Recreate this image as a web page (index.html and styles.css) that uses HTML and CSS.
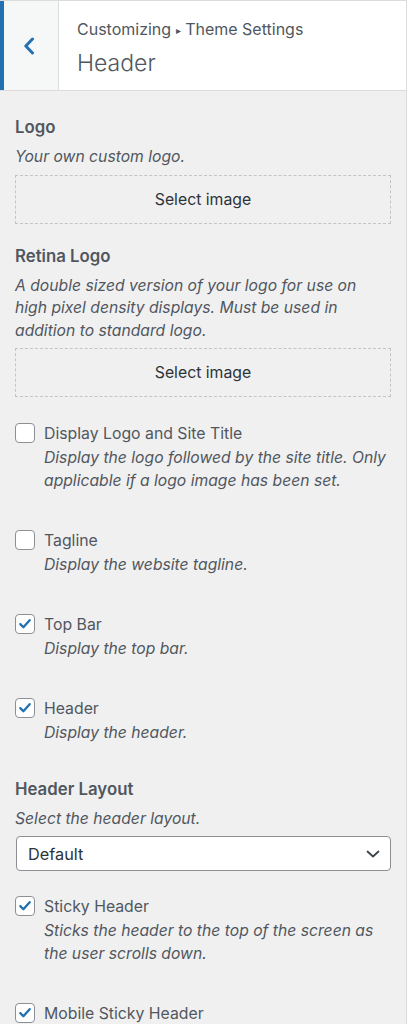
FILE: index.html
```html
<!DOCTYPE html>
<html lang="en">
<head>
<meta charset="utf-8">
<title>Customizing Header</title>
<link rel="stylesheet" href="styles.css">
</head>
<body>
<div class="panel">
  <header class="sec-head">
    <button class="back" aria-label="Back">
      <svg width="12" height="18" viewBox="0 0 12 18"><path d="M9.5 2 L2.8 9 L9.5 16" fill="none" stroke="#2271b1" stroke-width="3" stroke-linecap="round" stroke-linejoin="round"/></svg>
    </button>
    <div class="titles">
      <span class="crumb">Customizing <span class="tri">▸</span> Theme Settings</span>
      <h1 class="title">Header</h1>
    </div>
  </header>
  <ul class="controls">
    <li class="control media first">
      <span class="ctl-title">Logo</span>
      <span class="desc">Your own custom logo.</span>
      <button class="upload">Select image</button>
    </li>
    <li class="control media">
      <span class="ctl-title">Retina Logo</span>
      <span class="desc">A double sized version of your logo for use on high pixel density displays. Must be used in addition to standard logo.</span>
      <button class="upload">Select image</button>
    </li>
    <li class="control check after-media">
      <span class="box"></span>
      <div class="check-text">
        <span class="label">Display Logo and Site Title</span>
        <span class="desc">Display the logo followed by the site title. Only applicable if a logo image has been set.</span>
      </div>
    </li>
    <li class="control check">
      <span class="box"></span>
      <div class="check-text">
        <span class="label">Tagline</span>
        <span class="desc">Display the website tagline.</span>
      </div>
    </li>
    <li class="control check">
      <span class="box checked"><svg width="20" height="20" viewBox="0 0 20 20"><path d="M4.8 10.2 L8.2 13.6 L15.2 5.8" fill="none" stroke="#2271b1" stroke-width="2.6" stroke-linecap="round" stroke-linejoin="round"/></svg></span>
      <div class="check-text">
        <span class="label">Top Bar</span>
        <span class="desc">Display the top bar.</span>
      </div>
    </li>
    <li class="control check">
      <span class="box checked"><svg width="20" height="20" viewBox="0 0 20 20"><path d="M4.8 10.2 L8.2 13.6 L15.2 5.8" fill="none" stroke="#2271b1" stroke-width="2.6" stroke-linecap="round" stroke-linejoin="round"/></svg></span>
      <div class="check-text">
        <span class="label">Header</span>
        <span class="desc">Display the header.</span>
      </div>
    </li>
    <li class="control select-ctl">
      <span class="ctl-title">Header Layout</span>
      <span class="desc">Select the header layout.</span>
      <div class="select">
        <span>Default</span>
        <svg width="14" height="8" viewBox="0 0 14 8"><path d="M1.5 1.5 L7 6.5 L12.5 1.5" fill="none" stroke="#3c434a" stroke-width="1.8" stroke-linecap="round" stroke-linejoin="round"/></svg>
      </div>
    </li>
    <li class="control check after-select">
      <span class="box checked"><svg width="20" height="20" viewBox="0 0 20 20"><path d="M4.8 10.2 L8.2 13.6 L15.2 5.8" fill="none" stroke="#2271b1" stroke-width="2.6" stroke-linecap="round" stroke-linejoin="round"/></svg></span>
      <div class="check-text">
        <span class="label">Sticky Header</span>
        <span class="desc">Sticks the header to the top of the screen as the user scrolls down.</span>
      </div>
    </li>
    <li class="control check">
      <span class="box checked"><svg width="20" height="20" viewBox="0 0 20 20"><path d="M4.8 10.2 L8.2 13.6 L15.2 5.8" fill="none" stroke="#2271b1" stroke-width="2.6" stroke-linecap="round" stroke-linejoin="round"/></svg></span>
      <div class="check-text">
        <span class="label">Mobile Sticky Header</span>
        <span class="desc">Sticks the header on mobile devices.</span>
      </div>
    </li>
  </ul>
</div>
</body>
</html>
```

FILE: styles.css
```css
html, body {
  margin: 0;
  padding: 0;
  background: #ffffff;
}
body {
  font-family: Inter, "Noto Sans", "Liberation Sans", sans-serif;
  color: #50575e;
  height: 1024px;
  overflow: hidden;
}
.panel {
  width: 406px;
  min-height: 1024px;
  background: #f0f0f1;
  border-right: 1px solid #dcdcde;
}
.sec-head {
  display: flex;
  background: #ffffff;
  border-top: 1px solid #dcdcde;
  border-bottom: 1px solid #dcdcde;
  height: 89px;
}
.back {
  box-sizing: border-box;
  width: 59px;
  border: 0;
  border-left: 4px solid #2271b1;
  border-right: 1px solid #dcdcde;
  background: #f6f7f7;
  padding: 0 5px 0 0;
  margin: 0;
  display: flex;
  align-items: center;
  justify-content: center;
}
.titles {
  display: flex;
  flex-direction: column;
  padding: 18px 0 0 18px;
}
.crumb {
  font-size: 16px;
  line-height: 20px;
  color: #50575e;
  font-weight: 400;
}
.tri {
  font-size: 10px;
  vertical-align: 1px;
}
.title {
  margin: 8px 0 0;
  font-size: 23px;
  line-height: 30px;
  font-weight: 300;
  color: #50575e;
}
.controls {
  list-style: none;
  margin: 0;
  padding: 25px 15px 0 15px;
}
.control {
  margin: 0;
}
.ctl-title {
  display: block;
  font-size: 16.8px;
  font-weight: 600;
  line-height: 22px;
  margin-bottom: 8px;
  color: #50575e;
}
.desc {
  display: block;
  font-size: 15.7px;
  font-style: italic;
  line-height: 22.5px;
  color: #50575e;
}
.media {
  margin-top: 21px;
}
.media.first {
  margin-top: 0;
}
.upload {
  display: block;
  width: 100%;
  height: 49px;
  margin-top: 6px;
  border: 1px dashed #c3c4c7;
  background: transparent;
  font-family: inherit;
  font-size: 15.8px;
  color: #2c3338;
}
.check {
  display: flex;
  gap: 9px;
  margin-top: 37.5px;
}
.check.after-media {
  margin-top: 26px;
}
.check.after-select {
  margin-top: 25px;
}
.box {
  flex: none;
  box-sizing: border-box;
  width: 20px;
  height: 20px;
  border: 1px solid #8c8f94;
  border-radius: 4px;
  background: #ffffff;
  display: flex;
  align-items: center;
  justify-content: center;
}
.box svg {
  display: block;
}
.check-text {
  display: flex;
  flex-direction: column;
  flex: 1;
}
.label {
  font-size: 15.8px;
  line-height: 22px;
  color: #50575e;
}
.check-text .desc {
  margin-top: 2px;
}
.select-ctl {
  margin-top: 33.5px;
}
.select {
  box-sizing: border-box;
  margin-top: 6px;
  margin-left: 1px;
  height: 35px;
  background: #ffffff;
  border: 1px solid #8c8f94;
  border-radius: 4px;
  display: flex;
  align-items: center;
  justify-content: space-between;
  padding: 0 10px 0 11px;
  font-size: 16.3px;
  color: #2c3338;
}
```
